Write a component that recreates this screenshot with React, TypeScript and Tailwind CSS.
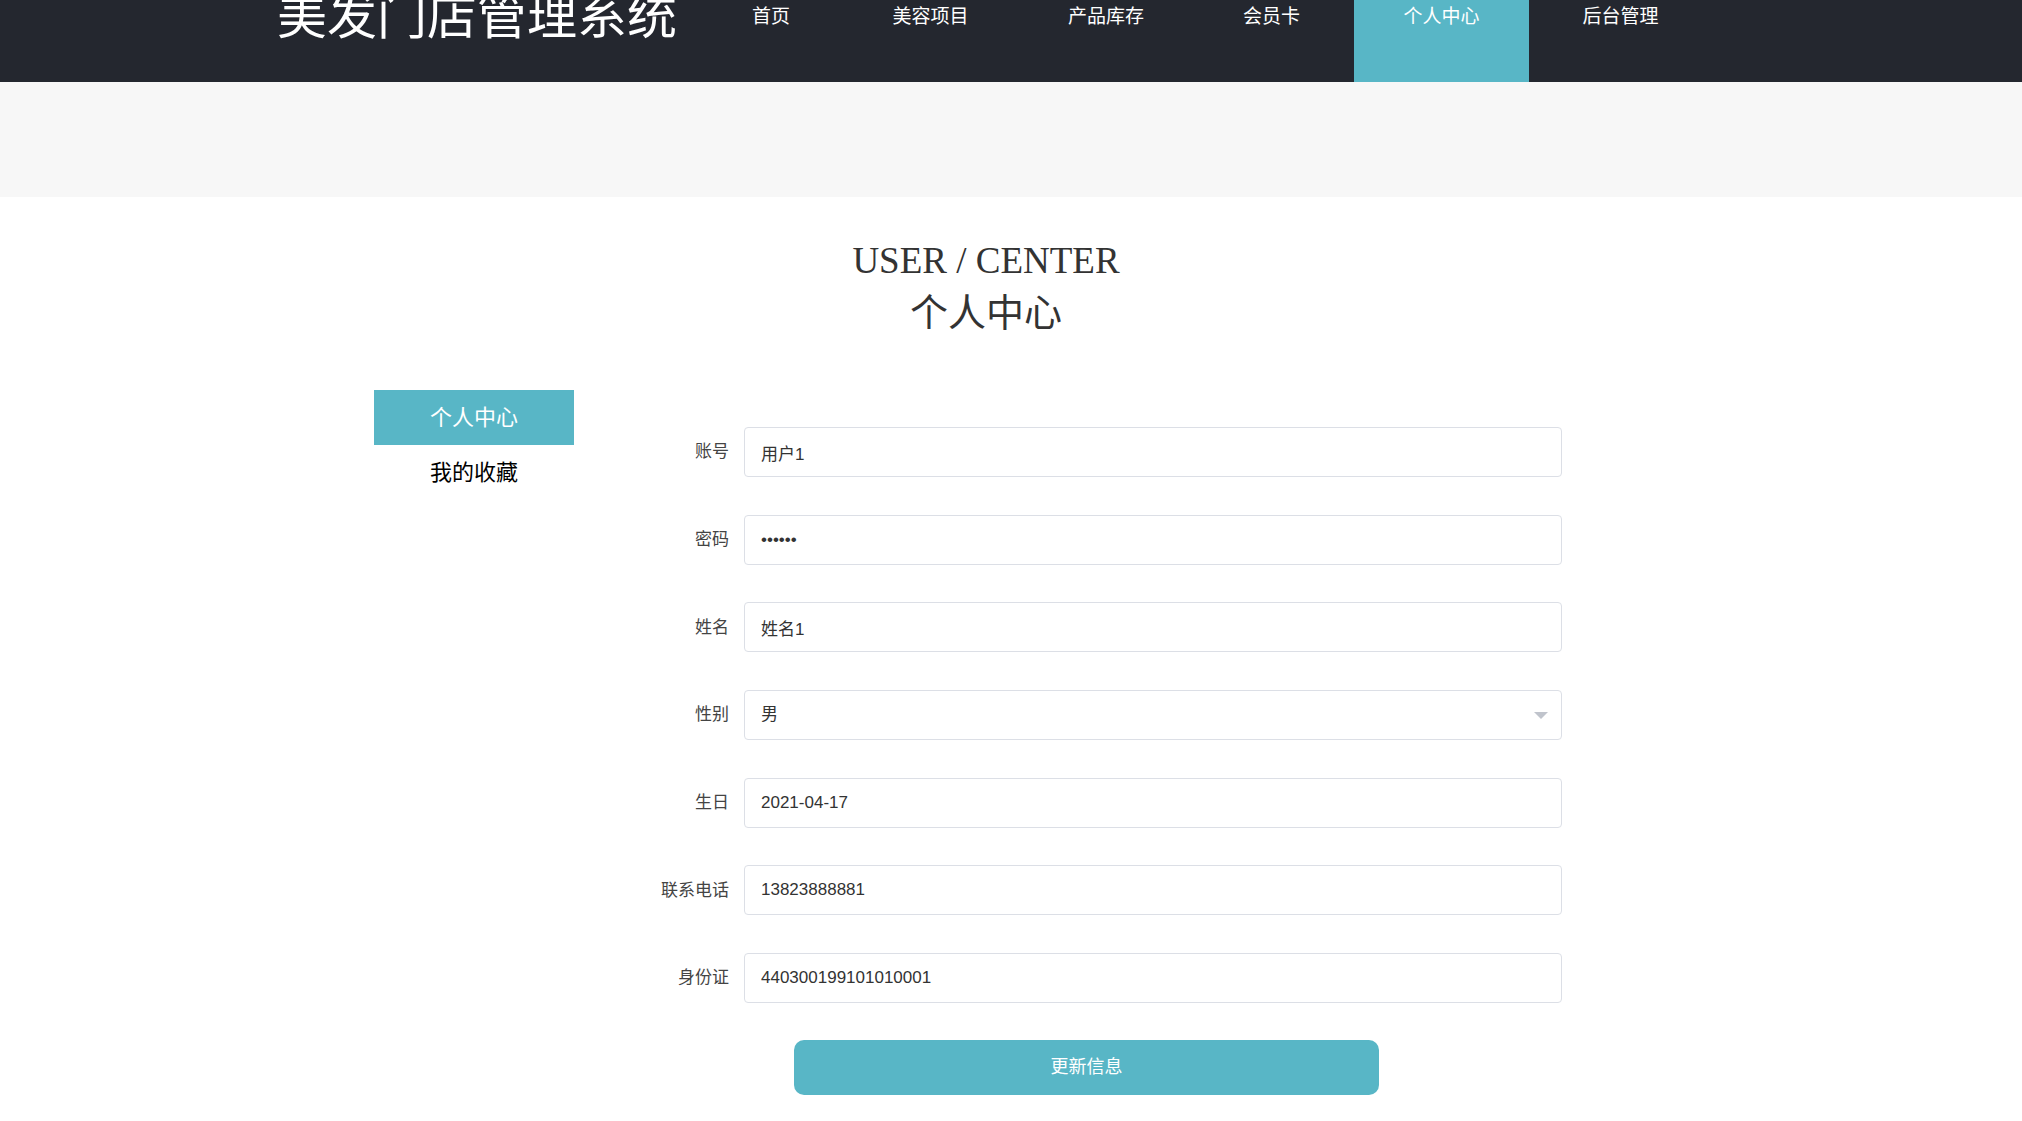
import React from "react";

const navItems = [
  { name: "首页", cls: "ml-0" },
  { name: "美容项目", cls: "ml-[3.5px]" },
  { name: "产品库存", cls: "ml-[0.5px]" },
  { name: "会员卡", cls: "ml-0" },
  { name: "个人中心", cls: "ml-[4.5px]", active: true },
  { name: "后台管理", cls: "ml-[4px]" },
];

const fields = [
  { label: "账号", value: "用户1" },
  { label: "密码", value: "123456", type: "password" },
  { label: "姓名", value: "姓名1" },
  { label: "性别", value: "男", select: true },
  { label: "生日", value: "2021-04-17" },
  { label: "联系电话", value: "13823888881" },
  { label: "身份证", value: "440300199101010001" },
];

const App = () => {
  return (
    <div className="w-full min-h-screen bg-white font-['Liberation_Sans','Noto_Sans_CJK_SC',sans-serif]">
      {/* header */}
      <div className="w-full h-[82px] bg-[#24272f] flex items-start overflow-hidden">
        <div className="ml-[277px] -mt-[13px] w-[400px] text-[50px] leading-[50px] text-white font-['Noto_Sans_CJK_SC',sans-serif] whitespace-nowrap">
          美发门店管理系统
        </div>
        <div className="ml-[25.5px] flex h-full">
          {navItems.map((item) => (
            <div
              key={item.name}
              className={
                item.active
                  ? `${item.cls} h-full px-[49.5px] text-[19px] leading-[33px] text-white bg-[#58b6c6] whitespace-nowrap`
                  : `${item.cls} h-full px-[49.5px] text-[19px] leading-[33px] text-white whitespace-nowrap`
              }
            >
              {item.name}
            </div>
          ))}
        </div>
      </div>

      {/* banner strip */}
      <div className="w-full h-[115px] bg-[#f7f7f7]"></div>

      <div className="ml-[374px] w-[1224px]">
        <div className="mt-[42px] text-center text-[#333]">
          <div className="text-[37px] leading-[44px] font-['Liberation_Serif',serif]">
            USER / CENTER
          </div>
          <div className="mt-[8px] text-[38px] leading-[44px] font-['Liberation_Serif','Noto_Sans_CJK_SC',serif]">
            个人中心
          </div>
        </div>

        <div className="mt-[55px] flex items-start">
          <div className="w-[200px] grid">
            <div className="h-[55px] bg-[#58b6c6] text-white text-[22px] flex items-center justify-center">
              个人中心
            </div>
            <div className="h-[55px] text-black text-[22px] flex items-center justify-center">
              我的收藏
            </div>
          </div>

          <div className="ml-[55px] pt-[37px] grid gap-[37.7px]">
            {fields.map((f) => (
              <div key={f.label} className="flex items-center gap-[15px] h-[50px]">
                <span className="w-[100px] text-right text-[17px] text-[#444] whitespace-nowrap">
                  {f.label}
                </span>
                {f.select ? (
                  <div className="w-[818px] h-[50px] rounded-[4px] border border-[#dcdfe6] bg-white flex items-center justify-between pl-[16px] pr-[13px] text-[17px] text-[#333]">
                    <span>{f.value}</span>
                    <svg width="14" height="7" viewBox="0 0 14 7">
                      <path d="M0 0 L14 0 L7 7 Z" fill="#c0c4cc" />
                    </svg>
                  </div>
                ) : (
                  <input
                    readOnly
                    type={f.type || "text"}
                    defaultValue={f.value}
                    className="w-[818px] h-[50px] rounded-[4px] border border-[#dcdfe6] bg-white px-[16px] text-[17px] text-[#333] outline-none"
                  />
                )}
              </div>
            ))}
            <div className="-mt-[1px] pl-[165px]">
              <button className="w-[585px] h-[55px] rounded-[10px] bg-[#58b6c6] text-white text-[18px]">
                更新信息
              </button>
            </div>
          </div>
        </div>
      </div>
    </div>
  );
};

export default App;
